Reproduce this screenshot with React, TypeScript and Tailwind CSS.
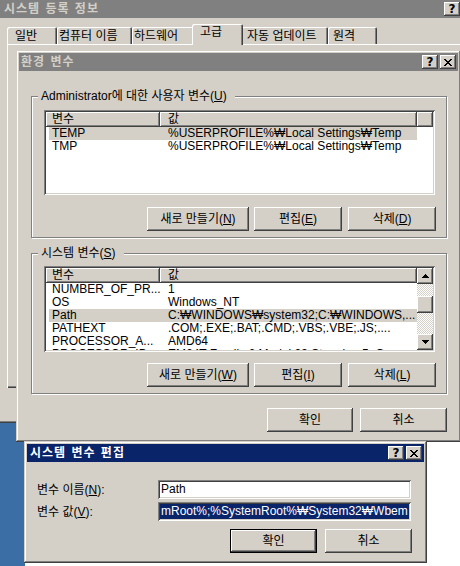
import type { ReactNode } from "react";

const raised = "shadow-[inset_-1px_-1px_#404040,inset_1px_1px_#ffffff,inset_-2px_-2px_#808080]";
const sunken = "shadow-[inset_1px_1px_#808080,inset_-1px_-1px_#ffffff,inset_2px_2px_#404040,inset_-2px_-2px_#d4d0c8]";
const frame = "shadow-[inset_-1px_-1px_#404040,inset_1px_1px_#d4d0c8,inset_-2px_-2px_#808080,inset_2px_2px_#ffffff]";

const X_PIXELS = [
	"xx....xx",
	".xx..xx.",
	"..xxxx..",
	"...xx...",
	"..xxxx..",
	".xx..xx.",
	"xx....xx",
];

function CaptionButton({ kind }: { kind: "help" | "close" }) {
	return (
		<div className={`w-[16px] h-[14px] bg-[#d4d0c8] ${raised} flex items-center justify-center`}>
			{kind === "help" ? (
				<span className="text-[12px] font-bold leading-none text-black font-['DejaVu_Sans',sans-serif]">?</span>
			) : (
				<svg width="8" height="7" viewBox="0 0 8 7" shapeRendering="crispEdges">
					{X_PIXELS.map((row, y) =>
						row.split("").map((c, x) => (c === "x" ? <rect key={`${x}-${y}`} x={x} y={y} width="1" height="1" fill="#000" /> : null))
					)}
				</svg>
			)}
		</div>
	);
}

function TitleBar({ title, active, pl }: { title: string; active?: boolean; pl: string }) {
	return (
		<div className={`h-[18px] shrink-0 flex items-center justify-between ${pl} pr-[2px] ${active ? "bg-[#0a246a]" : "bg-[#808080]"}`}>
			<span className={`font-bold leading-[18px] tracking-[1px] [word-spacing:1px] ${active ? "text-white" : "text-[#d4d0c8]"}`}>{title}</span>
			<div className="flex gap-[2px]">
				<CaptionButton kind="help" />
				<CaptionButton kind="close" />
			</div>
		</div>
	);
}

function Btn({ w, children, isDefault }: { w: string; children: ReactNode; isDefault?: boolean }) {
	return (
		<div className={`${w} h-[24px] shrink-0 bg-[#d4d0c8] flex items-center justify-center leading-[14px] ${isDefault ? "border border-black shadow-[inset_-1px_-1px_#404040,inset_1px_1px_#ffffff,inset_-2px_-2px_#808080]" : raised}`}>
			<span>{children}</span>
		</div>
	);
}

function HeaderCell({ w, children }: { w: string; children?: ReactNode }) {
	return (
		<div className={`${w} h-[15px] bg-[#d4d0c8] leading-[14px] whitespace-nowrap overflow-hidden shadow-[inset_-1px_-1px_#404040,inset_1px_1px_#ffffff,inset_-2px_-2px_#808080]`}>
			{children}
		</div>
	);
}

function Arrow({ down }: { down?: boolean }) {
	return (
		<div className={`h-[16px] shrink-0 bg-[#d4d0c8] ${raised} flex items-center justify-center`}>
			<svg width="7" height="4" viewBox="0 0 7 4" shapeRendering="crispEdges" className={down ? "rotate-180" : ""}>
				<path d="M3 0h1v1h1v1h1v1h1v1H0V3h1V2h1V1h1z" fill="#000" />
			</svg>
		</div>
	);
}

function ScrollBar() {
	return (
		<div className="w-[16px] shrink-0 flex flex-col bg-[image:repeating-conic-gradient(#d4d0c8_0%_25%,#ffffff_0%_50%)] bg-[length:2px_2px]">
			<Arrow />
			<div className="h-[12px] shrink-0" />
			<div className={`h-[17px] shrink-0 bg-[#d4d0c8] ${raised}`} />
			<div className="flex-1" />
			<Arrow down />
		</div>
	);
}

type Row = { name: string; value: string };

function ListView({ rows, selected, scroll, h }: { rows: Row[]; selected: number; scroll?: boolean; h: string }) {
	return (
		<div className={`${h} bg-white p-[2px] ${sunken} flex`}>
			<div className="flex-1 flex flex-col overflow-hidden">
				<div className="flex shrink-0">
					<HeaderCell w="w-[114px] pl-[6px]">변수</HeaderCell>
					<HeaderCell w="w-[257px] pl-[8px]">값</HeaderCell>
					{!scroll && <HeaderCell w="flex-1" />}
				</div>
				{rows.map((r, i) => (
					<div key={r.name} className={`flex shrink-0 h-[13px] leading-[12px] ml-[3px] w-[368px] whitespace-nowrap ${i === selected ? "bg-[#d4d0c8]" : ""}`}>
						<div className="w-[111px] pl-[3px] overflow-hidden">{r.name}</div>
						<div className="w-[257px] pl-[8px] overflow-hidden">{r.value}</div>
					</div>
				))}
			</div>
			{scroll && <ScrollBar />}
		</div>
	);
}

function GroupBox({ label, className, children }: { label: ReactNode; className: string; children: ReactNode }) {
	return (
		<div className={`relative border border-[#808080] shadow-[1px_1px_0_#ffffff,inset_1px_1px_0_#ffffff] ${className}`}>
			<div className="absolute -top-[8px] left-[6px] bg-[#d4d0c8] pl-[3px] pr-[8px] leading-[14px] whitespace-nowrap">{label}</div>
			{children}
		</div>
	);
}

const userVars: Row[] = [
	{ name: "TEMP", value: "%USERPROFILE%₩Local Settings₩Temp" },
	{ name: "TMP", value: "%USERPROFILE%₩Local Settings₩Temp" },
];

const systemVars: Row[] = [
	{ name: "NUMBER_OF_PR...", value: "1" },
	{ name: "OS", value: "Windows_NT" },
	{ name: "Path", value: "C:₩WINDOWS₩system32;C:₩WINDOWS,..." },
	{ name: "PATHEXT", value: ".COM;.EXE;.BAT;.CMD;.VBS;.VBE;.JS;...." },
	{ name: "PROCESSOR_A...", value: "AMD64" },
	{ name: "PROCESSOR_ID...", value: "EM64T Family 6 Model 23 Stepping 5, G..." },
];

function Tab({ w, pl, selected, children }: { w: string; pl: string; selected?: boolean; children: ReactNode }) {
	return (
		<div
			className={`${w} ${pl} shrink-0 bg-[#d4d0c8] whitespace-nowrap rounded-t-[2px] shadow-[inset_1px_1px_#ffffff,inset_-1px_0_#404040,inset_-2px_0_#808080] ${
				selected ? "relative z-10 -mx-[2px] h-[21px] -mb-[1px] pt-[1px] leading-[14px]" : "h-[17px] pt-[2px] leading-[14px]"
			}`}
		>
			{children}
		</div>
	);
}

function SystemProperties() {
	return (
		<div className={`absolute -left-[3px] -top-[3px] w-[486px] h-[426px] bg-[#d4d0c8] p-[3px] flex flex-col ${frame}`}>
			<TitleBar title="시스템 등록 정보" pl="pl-[4px]" />
			<div className="flex items-end h-[20px] mt-[6px] pl-[7px]">
				<Tab w="w-[50px]" pl="pl-[8px]">일반</Tab>
				<Tab w="w-[75px]" pl="pl-[2px]">컴퓨터 이름</Tab>
				<Tab w="w-[62px]" pl="pl-[2px]">하드웨어</Tab>
				<Tab w="w-[51px]" pl="pl-[8px]" selected>고급</Tab>
				<Tab w="w-[87px]" pl="pl-[6px]">자동 업데이트</Tab>
				<Tab w="w-[49px]" pl="pl-[5px]">원격</Tab>
			</div>
			<div className="ml-[7px] h-[344px] shrink-0 shadow-[inset_1px_1px_#ffffff,inset_-1px_-1px_#404040,inset_-2px_-2px_#808080]" />
		</div>
	);
}

function EnvVars() {
	return (
		<div className={`absolute left-[16px] top-[50px] w-[445px] h-[392px] bg-[#d4d0c8] p-[3px] flex flex-col ${frame}`}>
			<TitleBar title="환경 변수" pl="pl-[2px]" />
			<div className="flex flex-col pl-[12px] pr-[11px]">
				<GroupBox
					className="mt-[25px] h-[142px] pt-[13px] pl-[12px] pr-[11px]"
					label={<>Administrator에 대한 사용자 변수(<u>U</u>)</>}
				>
					<ListView rows={userVars} selected={0} h="h-[85px]" />
					<div className="flex justify-end mt-[12px] -mr-[1px]">
						<Btn w="w-[102px]">새로 만들기(<u>N</u>)</Btn>
						<div className="w-[5px]" />
						<Btn w="w-[88px]">편집(<u>E</u>)</Btn>
						<div className="w-[6px]" />
						<Btn w="w-[88px]">삭제(<u>D</u>)</Btn>
					</div>
				</GroupBox>
				<GroupBox className="mt-[15px] h-[141px] pt-[12px] pl-[12px] pr-[11px]" label={<>시스템 변수(<u>S</u>)</>}>
					<ListView rows={systemVars} selected={2} scroll h="h-[86px]" />
					<div className="flex justify-end mt-[11px] -mr-[1px]">
						<Btn w="w-[102px]">새로 만들기(<u>W</u>)</Btn>
						<div className="w-[5px]" />
						<Btn w="w-[88px]">편집(<u>I</u>)</Btn>
						<div className="w-[6px]" />
						<Btn w="w-[88px]">삭제(<u>L</u>)</Btn>
					</div>
				</GroupBox>
				<div className="flex justify-end gap-[7px] mt-[14px]">
					<Btn w="w-[86px]">확인</Btn>
					<Btn w="w-[87px]">취소</Btn>
				</div>
			</div>
		</div>
	);
}

function EditVar() {
	return (
		<div className={`absolute left-[24px] top-[441px] w-[403px] h-[122px] bg-[#d4d0c8] p-[3px] flex flex-col ${frame}`}>
			<TitleBar title="시스템 변수 편집" pl="pl-[3px]" active />
			<div className="flex flex-col pl-[10px] pr-[13px]">
				<div className="flex items-center mt-[18px] h-[19px]">
					<div className="w-[121px] leading-[14px]">변수 이름(<u>N</u>):</div>
					<div className={`flex-1 h-[19px] bg-white p-[2px] pl-[3px] leading-[15px] ${sunken}`}>Path</div>
				</div>
				<div className="flex items-center mt-[3px] h-[19px]">
					<div className="w-[121px] leading-[14px]">변수 값(<u>V</u>):</div>
					<div className={`flex-1 h-[19px] bg-white p-[2px] ${sunken}`}>
						<div className="h-full bg-[#0a246a] text-white leading-[15px] pl-[1px] whitespace-nowrap overflow-hidden">
							mRoot%;%SystemRoot%₩System32₩Wbem
						</div>
					</div>
				</div>
				<div className="flex justify-end gap-[8px] mt-[8px] -mr-[1px]">
					<Btn w="w-[87px]" isDefault>확인</Btn>
					<Btn w="w-[87px]">취소</Btn>
				</div>
			</div>
		</div>
	);
}

export default function App() {
	return (
		<div className="relative w-[460px] h-[566px] overflow-hidden bg-[#3a6ea5] text-[12px] text-black font-['Liberation_Sans','Noto_Sans_CJK_KR',sans-serif]">
			<div className="absolute left-[25px] top-[430px] w-[460px] h-[160px] bg-white" />
			<SystemProperties />
			<EnvVars />
			<EditVar />
		</div>
	);
}
